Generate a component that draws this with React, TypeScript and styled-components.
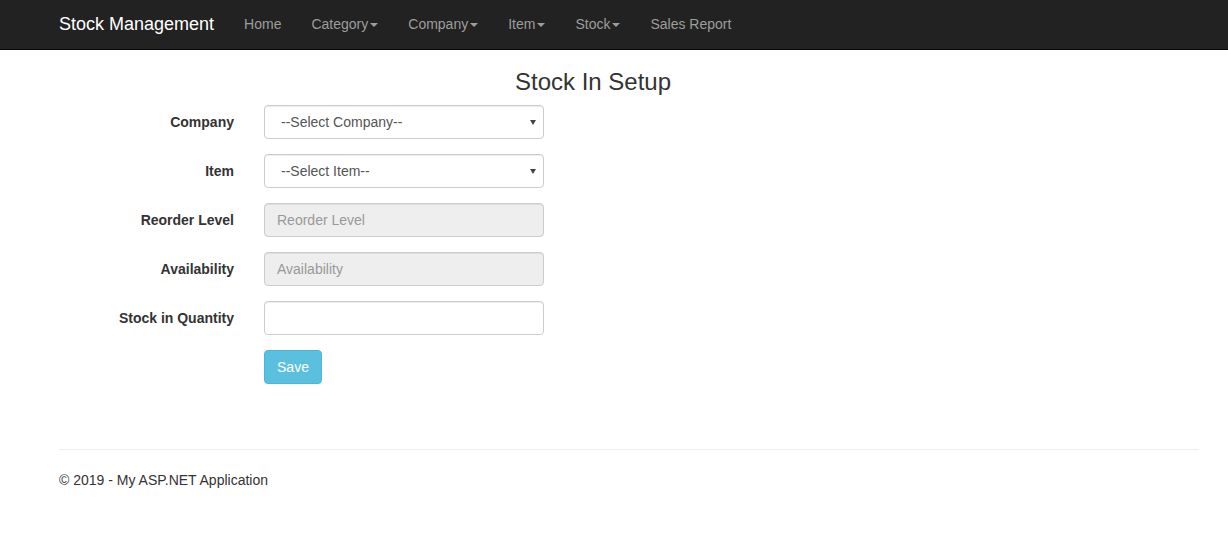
import React from "react";
import styled, { createGlobalStyle } from "styled-components";

const Global = createGlobalStyle`
  * { box-sizing: border-box; }
  html, body { margin: 0; padding: 0; background: #fff; }
  body {
    font-family: "Liberation Sans", Arial, Helvetica, sans-serif;
    font-size: 14px;
    line-height: 1.42857143;
    color: #333;
  }
`;

const Navbar = styled.nav`
  height: 50px;
  background: #222;
  border-bottom: 1px solid #080808;
`;

const NavInner = styled.div`
  display: flex;
  align-items: center;
  height: 49px;
  padding-left: 44px;
  padding-bottom: 2px;
`;

const Brand = styled.a`
  padding: 15px;
  font-size: 18px;
  line-height: 20px;
  color: #fff;
  text-decoration: none;
`;

const NavList = styled.ul`
  display: flex;
  list-style: none;
  margin: 0;
  padding: 0;
`;

const NavLink = styled.a`
  display: block;
  padding: 15px;
  line-height: 20px;
  color: #9d9d9d;
  text-decoration: none;
`;

const Caret = styled.span`
  display: inline-block;
  width: 0;
  height: 0;
  margin-left: 2px;
  vertical-align: middle;
  border-top: 4px solid #9d9d9d;
  border-right: 4px solid transparent;
  border-left: 4px solid transparent;
`;

const Body = styled.main`
  padding: 0 29px 0 59px;
  width: 1199px;
`;

const Title = styled.h3`
  width: 1068px;
  margin: 19px 0 10px;
  font-size: 24px;
  font-weight: 500;
  line-height: 1.1;
  text-align: center;
  color: #333;
`;

const Form = styled.form`
  display: flex;
  flex-direction: column;
  gap: 15px;
`;

const Row = styled.div`
  display: grid;
  grid-template-columns: 175px 280px;
  column-gap: 30px;
  align-items: center;
`;

const Label = styled.label`
  text-align: right;
  font-weight: 700;
  color: #333;
`;

const fieldBase = `
  display: block;
  width: 280px;
  height: 34px;
  padding: 6px 12px;
  font-family: "Liberation Sans", Arial, Helvetica, sans-serif;
  font-size: 14px;
  line-height: 1.42857143;
  color: #555;
  background: #fff;
  border: 1px solid #ccc;
  border-radius: 4px;
  box-shadow: inset 0 1px 1px rgba(0,0,0,.075);
  outline: none;
`;

const Input = styled.input`
  ${fieldBase}
  &:disabled { background: #eee; }
  &::placeholder { color: #999; opacity: 1; }
`;

const SelectWrap = styled.div`
  position: relative;
  width: 280px;
  &::after {
    content: "";
    position: absolute;
    right: 8px;
    top: 15px;
    border-top: 5px solid #444;
    border-left: 3px solid transparent;
    border-right: 3px solid transparent;
    pointer-events: none;
  }
`;

const Select = styled.select`
  ${fieldBase}
  appearance: none;
  -webkit-appearance: none;
  padding-left: 16px;
`;

const Button = styled.button`
  width: 58px;
  height: 34px;
  padding: 6px 12px;
  font-family: "Liberation Sans", Arial, Helvetica, sans-serif;
  font-size: 14px;
  line-height: 1.42857143;
  color: #fff;
  background: #5bc0de;
  border: 1px solid #46b8da;
  border-radius: 4px;
`;

const Hr = styled.hr`
  margin: 65px 0 20px;
  border: 0;
  border-top: 1px solid #eee;
  width: 1140px;
`;

const Footer = styled.footer`
  p { margin: 0 0 10px; }
`;

const navItems: { label: string; caret: boolean }[] = [
  { label: "Home", caret: false },
  { label: "Category", caret: true },
  { label: "Company", caret: true },
  { label: "Item", caret: true },
  { label: "Stock", caret: true },
  { label: "Sales Report", caret: false },
];

export default function App() {
  return (
    <>
      <Global />
      <Navbar>
        <NavInner>
          <Brand href="#">Stock Management</Brand>
          <NavList>
            {navItems.map((n) => (
              <li key={n.label}>
                <NavLink href="#">
                  {n.label}
                  {n.caret && <Caret />}
                </NavLink>
              </li>
            ))}
          </NavList>
        </NavInner>
      </Navbar>
      <Body>
        <Title>Stock In Setup</Title>
        <Form>
          <Row>
            <Label>Company</Label>
            <SelectWrap>
              <Select defaultValue="">
                <option value="">--Select Company--</option>
              </Select>
            </SelectWrap>
          </Row>
          <Row>
            <Label>Item</Label>
            <SelectWrap>
              <Select defaultValue="">
                <option value="">--Select Item--</option>
              </Select>
            </SelectWrap>
          </Row>
          <Row>
            <Label>Reorder Level</Label>
            <Input disabled placeholder="Reorder Level" />
          </Row>
          <Row>
            <Label>Availability</Label>
            <Input disabled placeholder="Availability" />
          </Row>
          <Row>
            <Label>Stock in Quantity</Label>
            <Input />
          </Row>
          <Row>
            <span />
            <Button type="button">Save</Button>
          </Row>
        </Form>
        <Hr />
        <Footer>
          <p>© 2019 - My ASP.NET Application</p>
        </Footer>
      </Body>
    </>
  );
}
